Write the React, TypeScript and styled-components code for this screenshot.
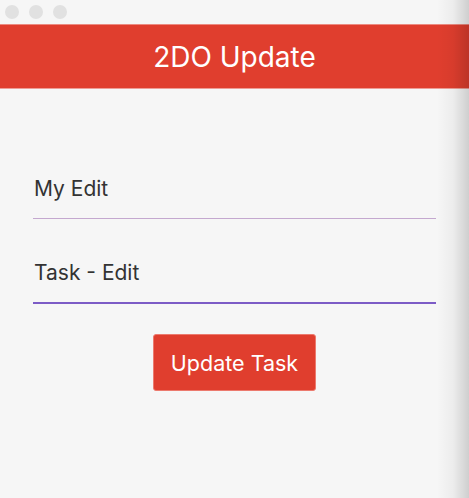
import React from "react";
import styled, { createGlobalStyle } from "styled-components";

const Global = createGlobalStyle`
  html, body { margin: 0; padding: 0; background: #f6f6f6; }
  body { font-family: Inter, "Noto Sans", "Liberation Sans", sans-serif; }
  * { box-sizing: border-box; }
`;

const Window = styled.div`
  position: relative;
  width: 469px;
  height: 498px;
  background: #f6f6f6;
  display: flex;
  flex-direction: column;
  overflow: hidden;
  &::after {
    content: "";
    position: absolute;
    top: 0;
    right: 0;
    width: 32px;
    height: 100%;
    pointer-events: none;
    background: linear-gradient(to right, rgba(0,0,0,0) 0%, rgba(0,0,0,0.04) 50%, rgba(0,0,0,0.16) 100%);
  }
`;

const TitleBar = styled.div`
  height: 24px;
  display: flex;
  align-items: center;
  gap: 10px;
  padding-left: 5px;
  background: #f6f6f6;
`;

const Dot = styled.span`
  width: 14px;
  height: 14px;
  border-radius: 50%;
  background: #e1e1e1;
`;

const Header = styled.header`
  height: 65px;
  background: #e03e2e;
  border-top: 1px solid #ec8a80;
  border-bottom: 1px solid #ee9d95;
  display: flex;
  align-items: center;
  justify-content: center;
  color: #fff;
  font-size: 28px;
  font-weight: 400;
`;

const Form = styled.form`
  display: flex;
  flex-direction: column;
  padding: 88px 33px 0 33px;
  width: 100%;
`;

const Input = styled.input<{ $active?: boolean }>`
  width: 100%;
  border: none;
  outline: none;
  background: transparent;
  font-family: inherit;
  font-size: 21px;
  line-height: 24px;
  color: #333;
  padding: 0 0 17px 1px;
  border-bottom: ${(p) => (p.$active ? "2px solid #7c5cc6" : "1.5px solid #c4a8cf")};
  margin-bottom: ${(p) => (p.$active ? 30 : 42)}px;
`;

const Button = styled.button`
  align-self: center;
  width: 163px;
  height: 57px;
  background: #e03e2e;
  border: 1px solid #ec7a6e;
  border-radius: 3px;
  color: #fff;
  font-family: inherit;
  font-size: 21.5px;
  cursor: pointer;
`;

export default function App() {
  return (
    <>
      <Global />
      <Window>
        <TitleBar>
          <Dot />
          <Dot />
          <Dot />
        </TitleBar>
        <Header>2DO Update</Header>
        <Form onSubmit={(e) => e.preventDefault()}>
          <Input defaultValue="My Edit" />
          <Input $active defaultValue="Task - Edit" />
          <Button type="submit">Update Task</Button>
        </Form>
      </Window>
    </>
  );
}
